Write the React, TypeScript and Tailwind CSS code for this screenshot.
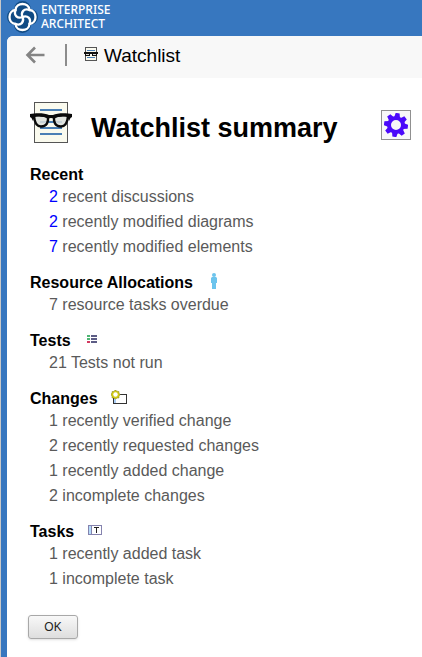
import type { ReactNode } from "react";

type Entry = {
  count: number;
  text: string;
  linked?: boolean;
};

type Group = {
  title: string;
  icon?: ReactNode;
  entries: Entry[];
};

const Logo = () => (
  <svg width="31" height="32" viewBox="0 0 31 32" className="shrink-0" aria-hidden="true">
    <g fill="#0f4a83">
      <circle cx="15.500" cy="8.500" r="8.500" />
      <circle cx="23" cy="16" r="8" />
      <circle cx="15.500" cy="23.500" r="8.500" />
      <circle cx="8" cy="16" r="8" />
    </g>
    <g fill="none" stroke="#fff" strokeWidth="2.3" strokeLinecap="round">
      <path d="M8.500 9C9 1 22 1 22.500 9C30.500 9.500 30.500 22.500 22.500 23C22 31 9 31 8.500 23C0.500 22.500 0.500 9.500 8.500 9Z" />
      <path d="M22.500 9C17 7 13.500 11 15.500 16C17.500 21 14 25 8.500 23" />
      <path d="M8.500 9C6.500 14.500 10.500 18 15.500 16C20.500 14 24.500 17.500 22.500 23" />
    </g>
  </svg>
);

const BackArrow = () => (
  <svg width="20" height="18" viewBox="0 0 20 18" fill="none" stroke="#848484" strokeWidth="2.6" aria-hidden="true">
    <path d="M19.500 9H3M10 1.500L2.500 9L10 16.500" />
  </svg>
);

const SmallWatchlistIcon = () => (
  <svg width="14" height="14" viewBox="0 0 14 14" aria-hidden="true">
    <rect x="1.500" y="0.500" width="11" height="13" fill="#fafaf0" stroke="#555" />
    <path d="M3 3.500H11M3 10.500H11" stroke="#4a7fb8" />
    <path d="M0 5H14V7H13V9H8V7H6V9H1V7H0Z" fill="#111" />
    <path d="M2 7.500H5M9 7.500H12" stroke="#ddd" />
  </svg>
);

const WatchlistIcon = () => (
  <svg width="42" height="42" viewBox="0 0 42 42" className="shrink-0" aria-hidden="true">
    <rect x="4.500" y="0.500" width="33" height="40" fill="#fafaee" stroke="#555" />
    <path d="M10 8H32M10 14H32M10 20H32M10 26H32M10 32H32" stroke="#4a7fb5" strokeWidth="2" />
    <path
      d="M4 14C8 12.500 15 13 18 15C18.500 20 17 24.500 11 24.500C6 24.500 4.500 20 4 14ZM38 14C34 12.500 27 13 24 15C23.500 20 25 24.500 31 24.500C36 24.500 37.500 20 38 14Z"
      fill="#dcdfdc"
      fillOpacity="0.85"
      stroke="#0a0a0a"
      strokeWidth="2.4"
    />
    <path
      d="M0 12C6 11 15 11 19 13H23C27 11 36 11 42 12V15L40.500 16L39 19L37.500 15C34 14 27 14.500 24 17C22 15.500 20 15.500 18 17C15 14.500 8 14 4.500 15L3 19L1.500 16L0 15Z"
      fill="#0a0a0a"
    />
  </svg>
);

const GearIcon = () => (
  <svg width="24" height="24" viewBox="0 0 24 24" aria-hidden="true">
    <g fill="#4b0afa" transform="rotate(8 12 12)">
      <path d="M10 0H14L15 5H9ZM10 24H14L15 19H9Z" />
      <path d="M10 0H14L15 5H9ZM10 24H14L15 19H9Z" transform="rotate(45 12 12)" />
      <path d="M10 0H14L15 5H9ZM10 24H14L15 19H9Z" transform="rotate(90 12 12)" />
      <path d="M10 0H14L15 5H9ZM10 24H14L15 19H9Z" transform="rotate(135 12 12)" />
    </g>
    <circle cx="12" cy="12" r="7" fill="none" stroke="#4b0afa" strokeWidth="4" />
  </svg>
);

const PersonIcon = () => (
  <svg width="6" height="16" viewBox="0 0 6 16" fill="#6dc4ed" aria-hidden="true">
    <circle cx="3" cy="2" r="2" />
    <path d="M1 4H5L6 5V10H5V16H1V10H0V5Z" />
  </svg>
);

const TestsIcon = () => (
  <svg width="10" height="8" viewBox="0 0 10 8" aria-hidden="true">
    <path d="M0 0H3V2H0ZM0 3H3V5H0Z" fill="#4fb574" />
    <path d="M0 6H3V8H0Z" fill="#d23a60" />
    <path d="M4 0H10V2H4ZM4 3H10V5H4ZM4 6H10V8H4Z" fill="#5c5c85" />
  </svg>
);

const ChangesIcon = () => (
  <svg width="16" height="14" viewBox="0 0 16 14" aria-hidden="true">
    <rect x="2.500" y="4.500" width="13" height="9" fill="#fff" stroke="#333" />
    <path d="M3 5H5V13H3Z" fill="#a9cdf5" />
    <path
      d="M4 0H5V1H6L7 1.500H8V3L8.500 4H9V5L8 6V8H6L5 9H4L3 8H1V6L0 5V4L1 3V1.500H3Z"
      fill="#d2cb14"
      stroke="#8a8420"
      strokeWidth="0.5"
    />
    <circle cx="4.500" cy="4.500" r="2.200" fill="#fff" />
  </svg>
);

const TasksIcon = () => (
  <svg width="14" height="10" viewBox="0 0 14 10" aria-hidden="true">
    <rect x="0.500" y="0.500" width="13" height="9" fill="#fff" stroke="#8583ae" />
    <path d="M1 1H3V9H1Z" fill="#b5dcfa" />
    <path d="M3.500 1V9" stroke="#8583ae" />
    <path d="M6 2.500H11M8.500 2V8" stroke="#222" />
  </svg>
);

const groups: Group[] = [
  {
    title: "Recent",
    entries: [
      { count: 2, text: "recent discussions", linked: true },
      { count: 2, text: "recently modified diagrams", linked: true },
      { count: 7, text: "recently modified elements", linked: true },
    ],
  },
  {
    title: "Resource Allocations",
    icon: <PersonIcon />,
    entries: [{ count: 7, text: "resource tasks overdue" }],
  },
  {
    title: "Tests",
    icon: <TestsIcon />,
    entries: [{ count: 21, text: "Tests not run" }],
  },
  {
    title: "Changes",
    icon: <ChangesIcon />,
    entries: [
      { count: 1, text: "recently verified change" },
      { count: 2, text: "recently requested changes" },
      { count: 1, text: "recently added change" },
      { count: 2, text: "incomplete changes" },
    ],
  },
  {
    title: "Tasks",
    icon: <TasksIcon />,
    entries: [
      { count: 1, text: "recently added task" },
      { count: 1, text: "incomplete task" },
    ],
  },
];

const WatchGroup = ({ title, icon, entries }: Group) => (
  <section>
    <h2 className="flex h-5 items-center gap-[13px] pt-0.5 text-base leading-5 font-bold text-black">
      {title}
      {icon && <span className="flex w-4 justify-center pb-1">{icon}</span>}
    </h2>
    <ul className="pl-[19px] text-base leading-[25px] text-[#5a5a5a]">
      {entries.map(({ count, text, linked }) => (
        <li key={text}>
          {linked ? (
            <a href="#" className="text-[#0000ff]">
              {count}
            </a>
          ) : (
            count
          )}{" "}
          {text}
        </li>
      ))}
    </ul>
  </section>
);

export default function App() {
  return (
    <div className="flex min-h-screen flex-col border-l border-[#c8c8c8] bg-[#3777bf] pl-[6px] font-['Liberation_Sans',Arial,sans-serif]">
      <header className="flex h-9 items-center gap-[3px] pb-0.5">
        <Logo />
        <div className="font-['Noto_Sans',sans-serif] text-xs leading-[14px] font-medium text-white">
          <div>ENTERPRISE</div>
          <div>ARCHITECT</div>
        </div>
      </header>

      <div className="flex-1 overflow-hidden rounded-tl-md bg-white">
        <nav className="flex h-[42px] items-center bg-[#f8f8f8] pb-1 pl-[18px]">
          <button type="button" aria-label="Back">
            <BackArrow />
          </button>
          <span className="ml-5 h-[22px] w-0.5 bg-[#8c8c8c]" />
          <span className="ml-[17px] flex items-center gap-1.5 pt-0.5 text-[19px] leading-6 text-black">
            <span className="pb-1">
              <SmallWatchlistIcon />
            </span>
            Watchlist
          </span>
        </nav>

        <main className="pr-[11px] pl-[23px]">
          <div className="flex items-start pt-6">
            <WatchlistIcon />
            <h1 className="ml-[19px] pt-2 text-[27px] leading-9 font-bold text-black">
              Watchlist summary
            </h1>
            <button
              type="button"
              aria-label="Settings"
              className="mt-2 ml-auto flex size-[30px] shrink-0 items-center justify-center border border-[#909090] bg-[#f8f8f8]"
            >
              <GearIcon />
            </button>
          </div>

          <div className="mt-[18px] flex flex-col gap-[13px]">
            {groups.map((group) => (
              <WatchGroup key={group.title} {...group} />
            ))}
          </div>

          <button
            type="button"
            className="mt-6 mb-4 -ml-0.5 h-6 w-[50px] rounded-[3px] border border-[#a8a8a8] bg-linear-to-b from-[#f8f8f8] to-[#dedede] text-xs text-[#222] shadow-sm"
          >
            OK
          </button>
        </main>
      </div>
    </div>
  );
}
